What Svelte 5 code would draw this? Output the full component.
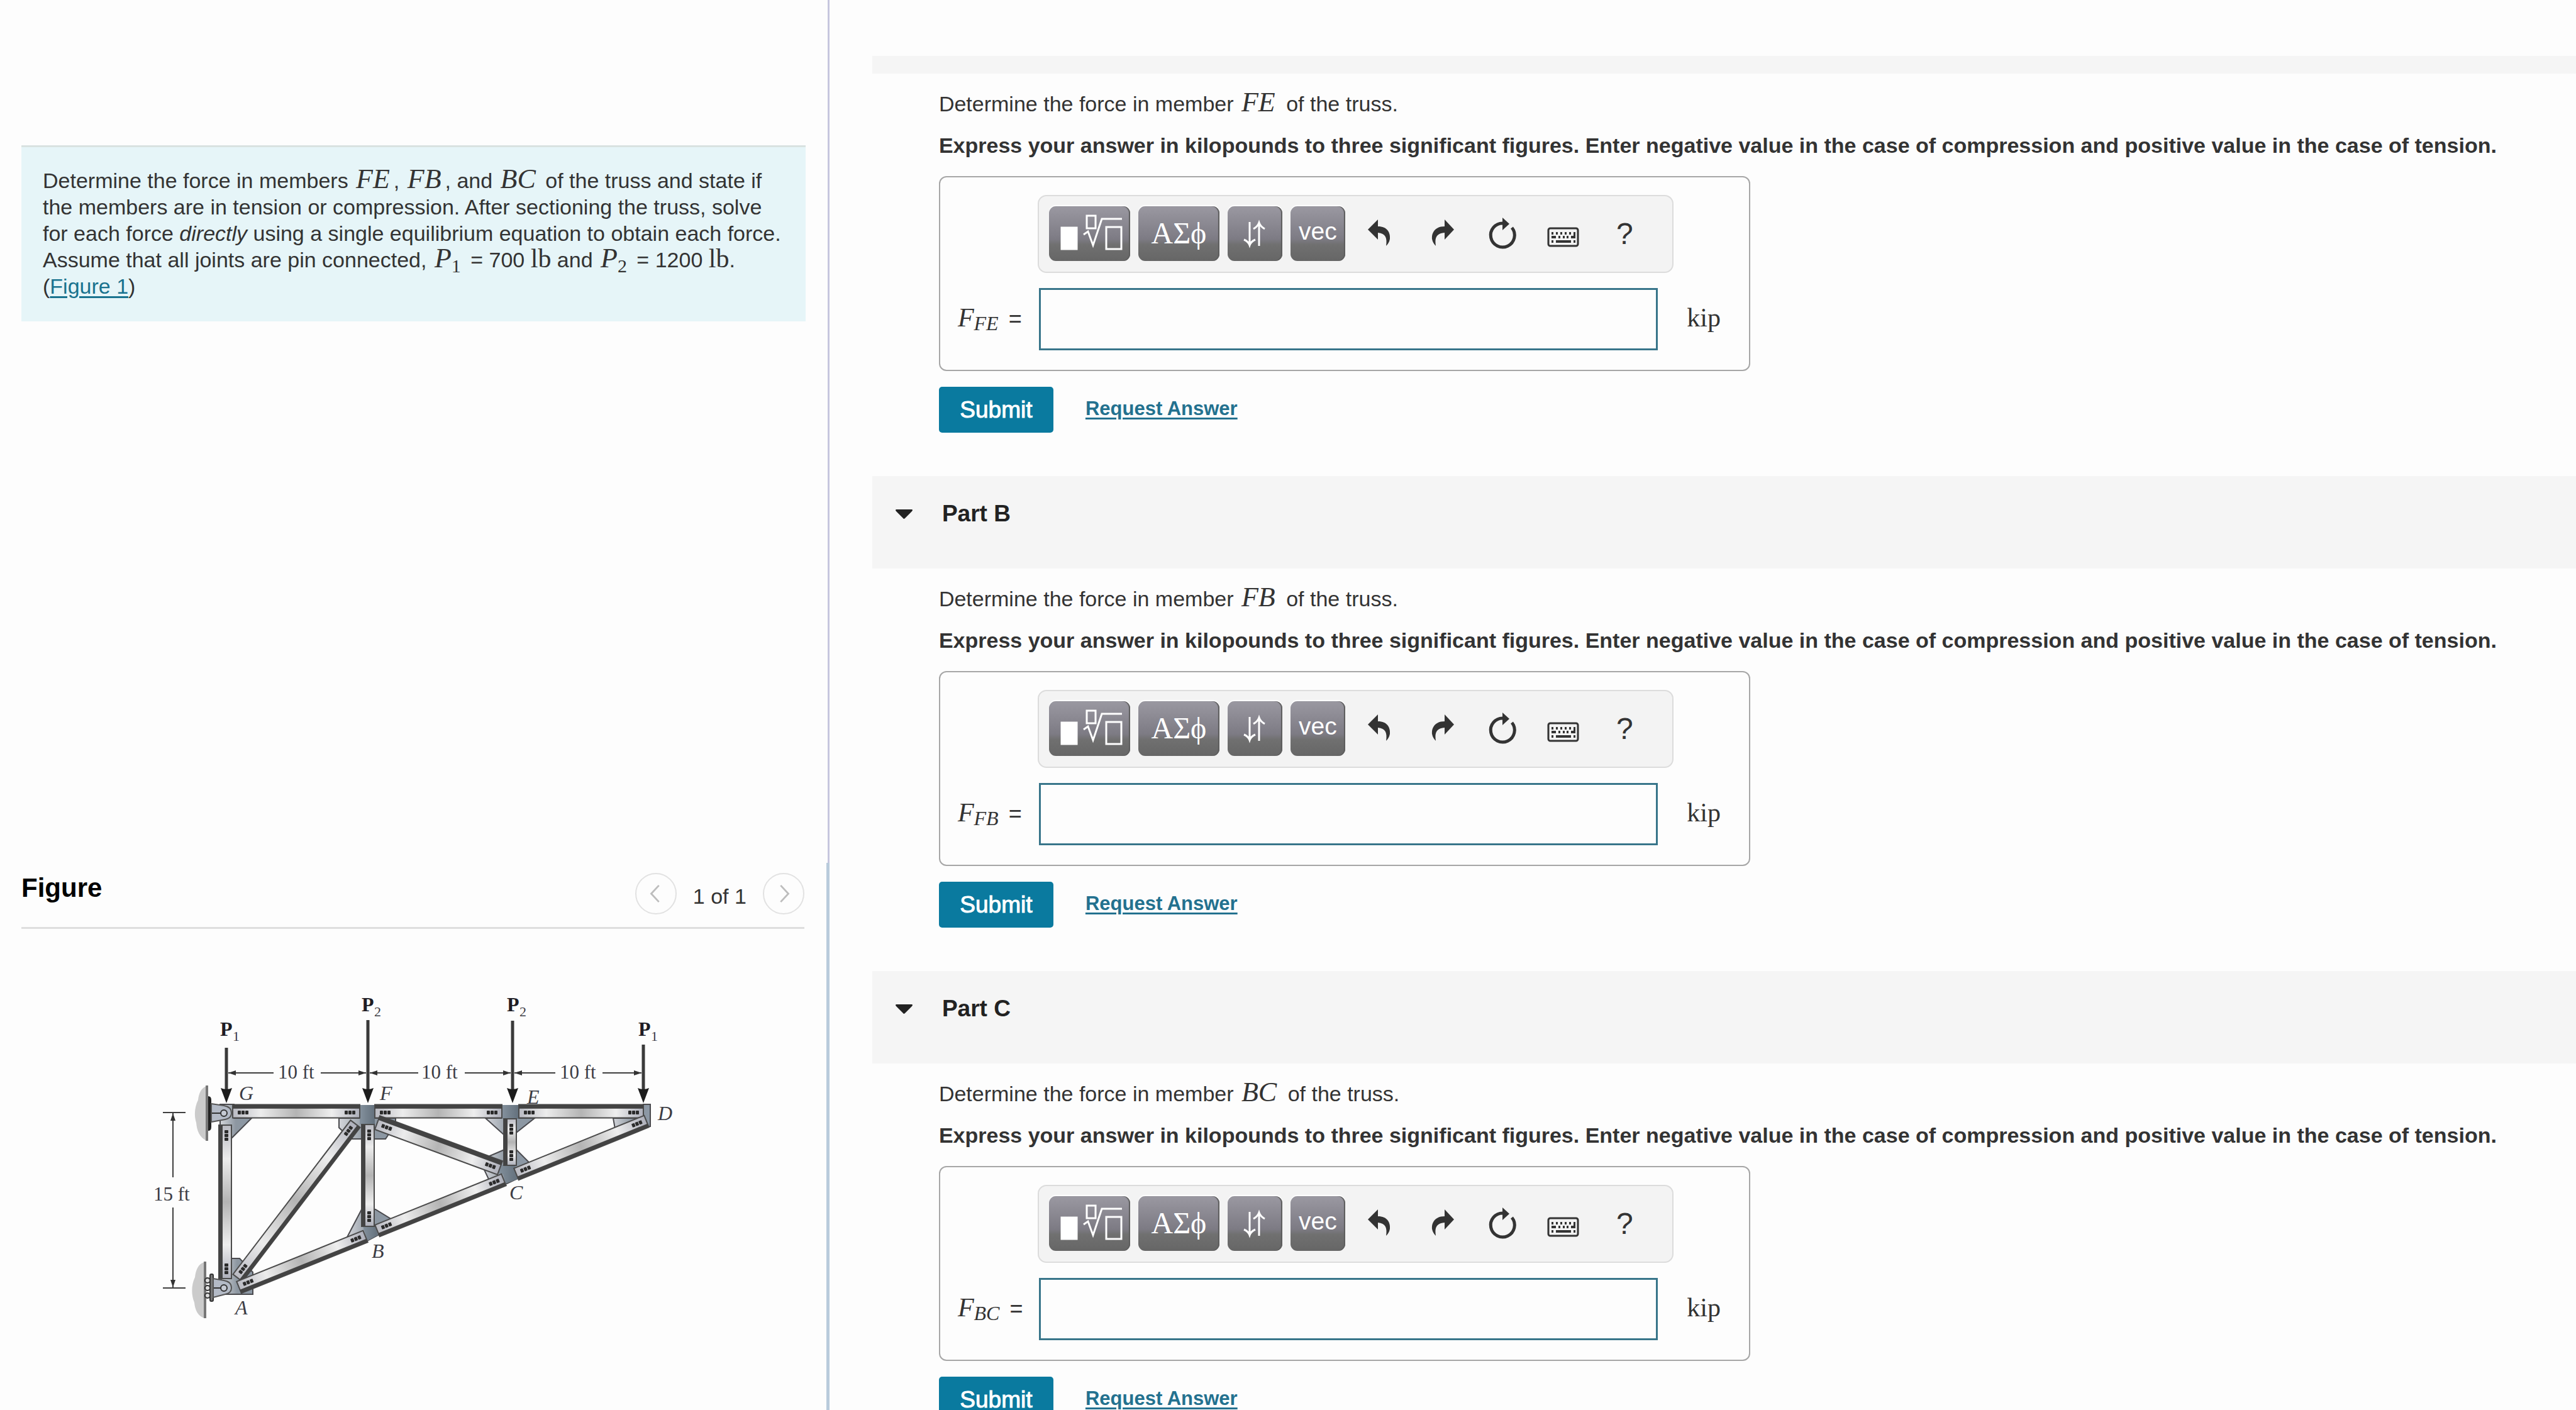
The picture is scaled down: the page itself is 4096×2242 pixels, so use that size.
<script lang="ts">
  interface Part {
    id: string;
    title: string;
    member: string;
  }

  interface Beam {
    from: [number, number];
    to: [number, number];
    width: number;
    side: number;
  }

  const parts: Part[] = [
    { id: "a", title: "", member: "FE" },
    { id: "b", title: "Part B", member: "FB" },
    { id: "c", title: "Part C", member: "BC" },
  ];

  // side: which edge of the beam carries the dark flange (1 = below, -1 = above)
  const beams: Beam[] = [
    { from: [148, 198], to: [350, 198], width: 21, side: -1 },
    { from: [374, 198], to: [576, 198], width: 21, side: -1 },
    { from: [603, 198], to: [801, 198], width: 21, side: -1 },
    { from: [136, 220], to: [136, 464], width: 20, side: 1 },
    { from: [363, 219], to: [363, 381], width: 20, side: 1 },
    { from: [589, 210], to: [589, 284], width: 20, side: 1 },
    { from: [156, 463], to: [343, 218], width: 19, side: 1 },
    { from: [158, 478], to: [359, 397], width: 20, side: 1 },
    { from: [378, 388], to: [579, 307], width: 20, side: 1 },
    { from: [599, 298], to: [806, 214], width: 20, side: 1 },
    { from: [378, 216], to: [573, 288], width: 23, side: -1 },
  ];

  const loads = [
    { x: 138, top: 97, label: 128, base: 78, sub: "1" },
    { x: 363, top: 53, label: 353, base: 39, sub: "2" },
    { x: 593, top: 54, label: 584, base: 39, sub: "2" },
    { x: 801, top: 92, label: 793, base: 78, sub: "1" },
  ];

  const spans = [
    { x1: 141, x2: 213, text: 220, x3: 288, x4: 360 },
    { x1: 366, x2: 443, text: 448, x3: 517, x4: 590 },
    { x1: 596, x2: 661, text: 668, x3: 736, x4: 798 },
  ];

  const joints = [
    { name: "G", x: 158, y: 180 },
    { name: "F", x: 382, y: 180 },
    { name: "E", x: 616, y: 186 },
    { name: "D", x: 824, y: 212 },
    { name: "C", x: 588, y: 338 },
    { name: "B", x: 369, y: 431 },
    { name: "A", x: 152, y: 521 },
  ];

  let answers = $state<Record<string, string>>({ a: "", b: "", c: "" });

  function beamLength(b: Beam) {
    return Math.hypot(b.to[0] - b.from[0], b.to[1] - b.from[1]);
  }

  function beamAngle(b: Beam) {
    return (Math.atan2(b.to[1] - b.from[1], b.to[0] - b.from[0]) * 180) / Math.PI;
  }
</script>

<div class="page">
  <aside class="left">
    <section class="problem">
      <div class="intro">
        Determine the force in members <i class="math">FE</i>, <i class="math">FB</i>, and
        <i class="math">BC</i> of the truss and state if the members are in tension or compression.
        After sectioning the truss, solve for each force <em>directly</em> using a single equilibrium
        equation to obtain each force. Assume that all joints are pin connected,
        <span class="math"><i>P</i><sub>1</sub></span> = 700 <span class="unit-inline">lb</span> and
        <span class="math"><i>P</i><sub>2</sub></span> = 1200 <span class="unit-inline">lb</span>.<br />
        (<a href="#figure">Figure 1</a>)
      </div>
    </section>

    <section class="figure-pane" id="figure">
      <header class="figure-header">
        <h2>Figure</h2>
        <nav class="pager">
          <button class="round-btn" aria-label="Previous figure">
            <svg viewBox="0 0 66 66"><path d="M38 19 L25 33 L38 47" /></svg>
          </button>
          <span class="count">1 of 1</span>
          <button class="round-btn" aria-label="Next figure">
            <svg viewBox="0 0 66 66"><path d="M28 19 L41 33 L28 47" /></svg>
          </button>
        </nav>
      </header>

      <svg class="truss" viewBox="0 0 870 540">
        <defs>
          <linearGradient id="steel">
            <stop offset="0" stop-color="#b9bac2" />
            <stop offset="0.22" stop-color="#ececec" />
            <stop offset="0.5" stop-color="#b4b4b4" />
            <stop offset="0.78" stop-color="#eeeeee" />
            <stop offset="1" stop-color="#adafba" />
          </linearGradient>
          <linearGradient id="plate">
            <stop offset="0" stop-color="#d3d5da" />
            <stop offset="0.5" stop-color="#8d97a1" />
            <stop offset="1" stop-color="#8c98a5" />
          </linearGradient>
          <linearGradient id="joint">
            <stop offset="0" stop-color="#84919d" />
            <stop offset="1" stop-color="#63707c" />
          </linearGradient>
        </defs>

        <!-- Wall supports -->
        <path class="wall" d="M107 158 C98 160 94 170 93 180 C88 190 86 204 90 216 C91 228 95 240 107 245Z" />
        <path class="wall" d="M103 438 C93 440 89 452 88 462 C82 474 82 490 87 502 C88 514 93 524 103 527Z" />
        <path class="wall-edge" d="M107 157 V245 M104 437 V527" />
        <path class="anchor" d="M109 174 Q114 174 114 180 V223 Q114 229 109 229Z" />
        <g class="roller">
          <circle cx="108" cy="467" r="4" />
          <circle cx="108" cy="479" r="4" />
          <circle cx="108" cy="491" r="4" />
        </g>
        <rect class="roller-plate" x="112" y="457" width="5" height="43" rx="2" />

        <!-- Gusset plates -->
        <g class="gusset">
          <path d="M128 187 H150 V209 H178 L146 241 V220 H128Z" />
          <path d="M317 209 H407 V218 L391 242 H336 L317 224Z" />
          <path d="M550 209 H628 L599 232 V236 H580Z" />
          <path d="M753 209 H801 V187 H812 V222 L756 226Z" />
          <path d="M353 354 L330 398 L362 404 L379 395 L401 370 L375 354Z" />
          <path d="M580 259 L552 271 L547 289 L555 306 L582 314 L601 305 L619 279 L599 259Z" />
          <path d="M146 432 H159 L180 454 V489 H130 V464 H146Z" />
        </g>
        <path class="lug" d="M114 186 L134 189 Q146 191 146 201 Q146 209 136 211 L114 215Z" />
        <path class="lug" d="M117 464 L134 467 Q146 469 146 479 Q146 487 136 489 L117 494Z" />
        <g class="node">
          <path d="M350 188 H374 V219 H350Z" />
          <path d="M576 188 H603 V210 H576Z" />
          <path d="M355 381 H375 L379 395 L362 404Z" />
          <path d="M574 283 H597 L601 306 L582 313 L578 298 L569 297Z" />
        </g>

        {#each beams as beam}
          {@const len = beamLength(beam)}
          {@const flange = beam.width * 0.3}
          <g transform="translate({beam.from[0]} {beam.from[1]}) rotate({beamAngle(beam)})">
            <rect class="beam" y={-beam.width / 2} width={len} height={beam.width} fill="url(#steel)" />
            <rect class="flange" y={beam.side > 0 ? beam.width / 2 - flange : -beam.width / 2} width={len} height={flange} />
            {#each [10, 16, 22, len - 22, len - 16, len - 10] as x}
              <rect class="rivet" x={x - 2} y={-beam.side * 2 - 3} width="5" height="6" rx="1" />
            {/each}
          </g>
        {/each}

        <g class="pin">
          <path d="M115 201 H129 M118 479 H129" />
          <circle cx="134" cy="201" r="5" />
          <circle cx="134" cy="479" r="5" />
        </g>

        <!-- Loads -->
        {#each loads as load}
          <path class="load" d="M{load.x} {load.top} V166" />
          <path class="head" d="M{load.x - 9} 161 Q{load.x} 165 {load.x + 9} 161 L{load.x} 185Z" />
          <text class="force" x={load.label} y={load.base}>P</text>
          <text class="index" x={load.label + 20} y={load.base + 8}>{load.sub}</text>
        {/each}

        <!-- Dimensions -->
        {#each spans as span}
          <path class="dim" d="M{span.x1} 137 H{span.x2} M{span.x3} 137 H{span.x4}" />
          <path class="tip" d="M{span.x1} 137 l12 -4 v8Z M{span.x4} 137 l-12 -4 v8Z" />
          <text class="size" x={span.text} y="146">10 ft</text>
        {/each}
        <path class="dim" d="M37 200 H73 M37 479 H73 M53 201 V303 M53 351 V478" />
        <path class="tip" d="M53 201 l-4 12 h8Z M53 478 l-4 -12 h8Z" />
        <text class="size" x="22" y="340">15 ft</text>

        {#each joints as joint}
          <text class="joint" x={joint.x} y={joint.y}>{joint.name}</text>
        {/each}
      </svg>
    </section>
  </aside>

  <main class="right">
    {#each parts as part}
      <section class="part">
        {#if part.title}
          <header class="part-header">
            <svg class="caret" viewBox="0 0 27 15"><path d="M1 0 H26 Q28 1 26 3 L15 14 Q13 16 12 14 L1 3 Q-1 1 1 0Z" /></svg>
            <h3>{part.title}</h3>
          </header>
        {:else}
          <div class="part-header-end"></div>
        {/if}

        <div class="part-body">
          <p class="question">
            Determine the force in member <i class="math">{part.member}</i> of the truss.
          </p>
          <p class="instructions">
            Express your answer in kilopounds to three significant figures. Enter negative value in the
            case of compression and positive value in the case of tension.
          </p>

          <div class="answer-box">
            <div class="toolbar">
              <button class="tool wide" aria-label="Templates">
                <svg viewBox="0 0 129 87">
                  <rect x="20" y="34" width="24" height="34" fill="#fff" />
                  <rect x="60" y="15" width="14" height="20" />
                  <path d="M55 45 L62 40 L70 62 L84 20 H116" />
                  <rect x="91" y="33" width="24" height="35" />
                </svg>
              </button>
              <button class="tool wide greek">ΑΣϕ</button>
              <button class="tool" aria-label="Subscript and superscript">
                <svg viewBox="0 0 87 87">
                  <path d="M35 25 V61 M26 53 Q33 56 35 62 Q37 56 44 53 M50 63 V27 M41 36 Q48 32 50 26 Q52 32 59 36" />
                </svg>
              </button>
              <button class="tool vec">vec</button>
              <div class="icons">
                <button class="icon" aria-label="Undo">
                  <svg viewBox="2 0 91 87"><path d="M25 37 L41 21 V32 C56 32 61 42 60 52 C59 57 57 60 54 63 C56 50 53 43 41 42 V53Z" /></svg>
                </button>
                <button class="icon" aria-label="Redo">
                  <svg viewBox="2 0 91 87"><path d="M65 37 L50 21 V32 C35 32 29 42 30 52 C31 57 33 60 36 63 C34 50 37 43 50 42 V53Z" /></svg>
                </button>
                <button class="icon" aria-label="Reset">
                  <svg viewBox="2 0 91 87">
                    <path class="ring" d="M60 34 A19 19 0 1 1 46 27" />
                    <path d="M45 18 L56 28 L45 38Z" />
                  </svg>
                </button>
                <button class="icon" aria-label="Keyboard shortcuts">
                  <svg viewBox="2 0 91 87">
                    <rect class="frame" x="21" y="35" width="47" height="28" rx="3" />
                    <path d="M26 41h3v4h-3z M33 41h3v4h-3z M40 41h3v4h-3z M47 41h3v4h-3z M54 41h3v4h-3z M61 41h3v10h-7v-4h4z M26 47h7v4h-7z M37 47h3v4h-3z M44 47h3v4h-3z M50 47h3v4h-3z M26 54h3v4h-3z M33 54h24v4h-24z M61 54h3v4h-3z" />
                  </svg>
                </button>
                <button class="icon help" aria-label="Help">?</button>
              </div>
            </div>

            <div class="entry">
              <label for="answer-{part.id}"><i class="symbol">F<sub>{part.member}</sub></i><span class="equals">=</span></label>
              <input id="answer-{part.id}" type="text" bind:value={answers[part.id]} />
              <span class="unit">kip</span>
            </div>
          </div>

          <div class="actions">
            <button class="submit">Submit</button>
            <a class="request" href="#request-{part.id}">Request Answer</a>
          </div>
        </div>
      </section>
    {/each}
  </main>
</div>

<style>
:global(body) {
  background: #fdfdfd;
  overflow: hidden;
}

.page {
  display: flex;
  height: 100vh;
  overflow: hidden;
  font-family: 'Liberation Sans', Arial, sans-serif;
  font-size: 34px;
  color: #333;
}

button {
  font-family: inherit;
  padding: 0;
  border: 0;
  cursor: pointer;
}

svg {
  display: block;
}

/* Left column */
.left {
  flex: 0 0 32.2%;
  display: grid;
  grid-template-rows: 61.2% 1fr;
}

.problem {
  padding: 231px 35px 0 34px;
  border-right: 3px solid #c6c6de;
}

.intro {
  padding: 32px 32px 35px 34px;
  background: #e6f5f8;
  border-top: 3px solid #d9e2e1;
  line-height: 42px;
}

.intro a {
  color: #1a738f;
  text-decoration-thickness: 3px;
  text-underline-offset: 4px;
}

.math {
  font-family: 'Liberation Serif', 'Times New Roman', serif;
  font-size: 44px;
  line-height: 0;
  margin: 0 6px 0 3px;
}

.math sub {
  font-size: 30px;
  line-height: 0;
  vertical-align: -8px;
}

.unit-inline {
  font-family: 'Liberation Serif', 'Times New Roman', serif;
  font-size: 42px;
  line-height: 0;
}

.figure-pane {
  padding: 16px 35px 0 34px;
  border-right: 5px solid #b9cbdc;
}

.figure-header {
  display: flex;
  justify-content: space-between;
  align-items: flex-start;
  padding-bottom: 20px;
  border-bottom: 3px solid #dedede;
}

h2 {
  margin: 0;
  font-size: 42px;
  line-height: 48px;
  color: #000;
}

.pager {
  display: flex;
  align-items: center;
  gap: 26px;
}

.count {
  padding-top: 8px;
}

.round-btn {
  width: 66px;
  height: 66px;
  border: 2px solid #e2e2e2;
  border-radius: 50%;
  background: none;
}

.round-btn path {
  fill: none;
  stroke: #bdbdbd;
  stroke-width: 3;
}

/* Truss drawing */
.truss {
  width: 870px;
  margin: 92px 0 0 188px;
  font-family: 'Liberation Serif', 'Times New Roman', serif;
  fill: #3c3c44;
}

.wall {
  fill: #cbcbcb;
}

.wall-edge {
  stroke: #777;
  stroke-width: 4;
}

.anchor {
  fill: #222;
}

.lug {
  fill: #b3bac6;
  stroke: #555;
  stroke-width: 2;
}

.roller circle {
  fill: #ddd;
  stroke: #333;
  stroke-width: 2;
}

.roller-plate {
  fill: #777;
  stroke: #333;
  stroke-width: 2;
}

.gusset path {
  fill: url(#plate);
  stroke: #4a4a4e;
  stroke-width: 2;
}

.node path {
  fill: url(#joint);
}

.beam {
  stroke: #4b4b4b;
  stroke-width: 2;
}

.flange {
  fill: #434343;
}

.rivet {
  fill: #2b2b2b;
}

.pin path,
.pin circle {
  fill: #c5cad3;
  stroke: #333;
  stroke-width: 2;
}

.load {
  stroke: #3a3a3a;
  stroke-width: 5;
}

.head {
  fill: #1c1c1c;
}

.dim {
  stroke: #3f3f3f;
  stroke-width: 2;
}

.tip {
  fill: #333;
}

.force {
  font-size: 32px;
  font-weight: bold;
  fill: #1e1c24;
}

.index {
  font-size: 22px;
}

.size {
  font-size: 31px;
}

.joint {
  font-size: 32px;
  font-style: italic;
}

/* Right column */
.right {
  flex: 1;
  min-width: 0;
  padding: 89px 0 0 68px;
}

.part-header-end {
  height: 28px;
  background: #f5f5f5;
}

.part-header {
  display: flex;
  align-items: center;
  gap: 47px;
  padding: 35px 37px 62px;
  background: #f5f5f5;
}

.caret {
  width: 27px;
  fill: #222;
}

h3 {
  margin: 0;
  font-size: 37px;
  line-height: 50px;
  color: #222;
}

.part-body {
  padding: 23px 0 69px 106px;
}

p {
  margin: 0;
  line-height: 50px;
}

.question {
  margin-bottom: 16px;
}

.question .math {
  margin-right: 8px;
}

.instructions {
  margin-bottom: 24px;
  font-weight: bold;
}

.answer-box {
  box-sizing: border-box;
  max-width: 1290px;
  padding: 28px 45px 31px 28px;
  border: 2px solid #a6a6a6;
  border-radius: 12px;
}

.toolbar {
  display: flex;
  gap: 13px;
  width: max-content;
  margin: 0 0 24px 127px;
  padding: 16px 28px 17px 16px;
  border: 2px solid #dcdcdc;
  border-radius: 14px;
  background: #f3f3f3;
}

.tool {
  width: 87px;
  height: 87px;
  border-radius: 11px;
  background: linear-gradient(#9a98a1, #7d7b84 60%, #707070 70%, #666);
  box-shadow: 0 -2px 1px #fff, inset -2px 0 1px #5e5e5e;
  color: #fff;
}

.tool.wide {
  width: 129px;
}

.tool svg {
  fill: none;
  stroke: #fff;
  stroke-width: 3;
}

.greek {
  padding-bottom: 3px;
  font-family: 'Liberation Serif', 'Times New Roman', serif;
  font-size: 48px;
}

.vec {
  padding-bottom: 8px;
  font-size: 39px;
}

.icons {
  display: flex;
  gap: 6px;
}

.icon {
  width: 91px;
  height: 87px;
  background: none;
  color: #333;
}

.icon svg {
  fill: #333;
}

.icon .ring,
.icon .frame {
  fill: none;
  stroke: #333;
  stroke-width: 5;
}

.icon .frame {
  stroke-width: 3;
}

.help {
  padding-right: 4px;
  font-size: 48px;
}

.entry {
  display: flex;
  align-items: center;
}

label {
  flex: 0 0 129px;
  padding-bottom: 6px;
  white-space: nowrap;
}

.symbol {
  font-family: 'Liberation Serif', 'Times New Roman', serif;
  font-size: 42px;
}

.symbol sub {
  font-size: 32px;
  line-height: 0;
  vertical-align: -6px;
}

.equals {
  margin-left: 16px;
  font-size: 36px;
}

input {
  flex: 1;
  box-sizing: border-box;
  min-width: 0;
  height: 99px;
  padding: 0 16px;
  border: 3px solid #38758a;
  border-radius: 0;
  background: #fdfdfd;
  font-size: 42px;
}

.unit {
  margin-left: 46px;
  padding-bottom: 6px;
  font-family: 'Liberation Serif', 'Times New Roman', serif;
  font-size: 42px;
}

.actions {
  display: flex;
  align-items: center;
  gap: 51px;
  margin-top: 25px;
}

.submit {
  width: 182px;
  height: 73px;
  border-radius: 5px;
  background: #0a7a9f;
  color: #fff;
  font-size: 37px;
  -webkit-text-stroke: 1px #fff;
}

.request {
  padding-bottom: 4px;
  color: #23718f;
  font-size: 31px;
  font-weight: bold;
  text-decoration-thickness: 3px;
  text-underline-offset: 4px;
}
</style>
